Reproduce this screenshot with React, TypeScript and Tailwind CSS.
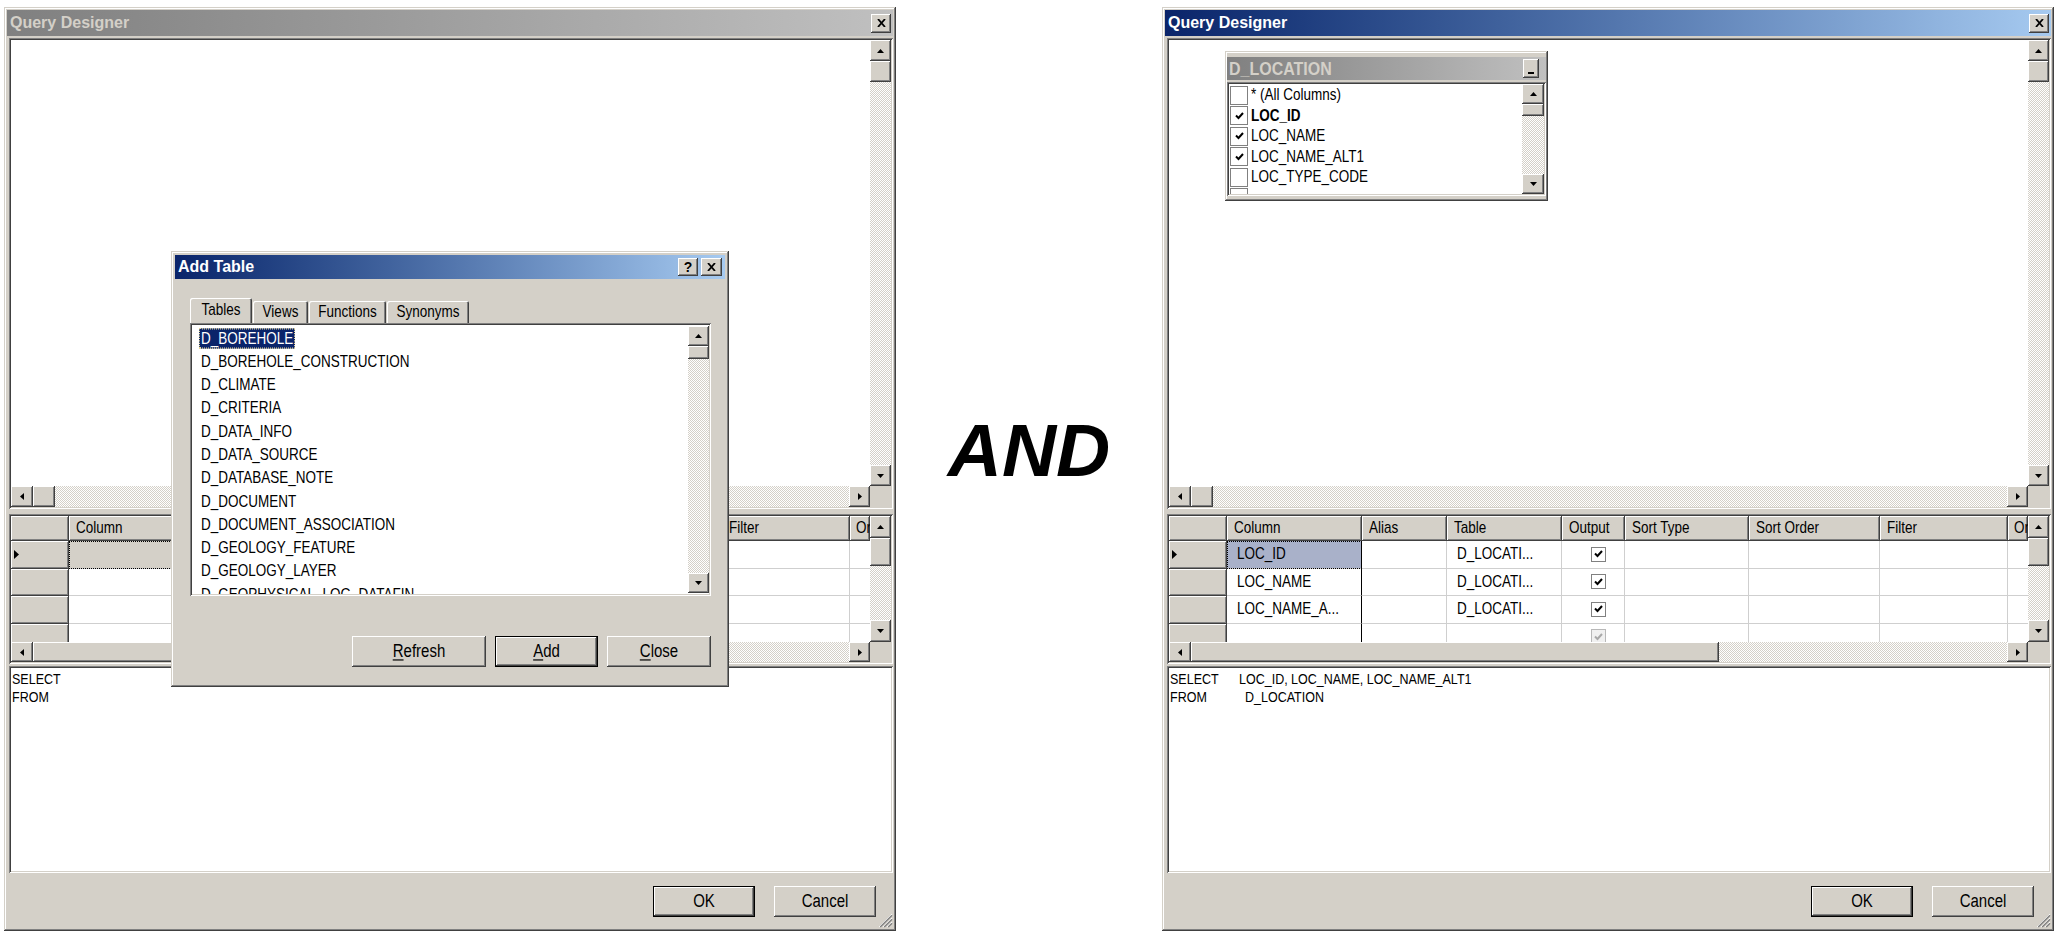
import React from "react";

const FACE = "bg-[#d4d0c8]";
const RAISED =
  "shadow-[inset_-1px_-1px_0_#404040,inset_1px_1px_0_#ffffff,inset_-2px_-2px_0_#808080,inset_2px_2px_0_#d4d0c8]";
const FRAME =
  "shadow-[inset_-1px_-1px_0_#404040,inset_1px_1px_0_#d4d0c8,inset_-2px_-2px_0_#808080,inset_2px_2px_0_#ffffff]";
const SUNKEN =
  "shadow-[inset_1px_1px_0_#808080,inset_-1px_-1px_0_#ffffff,inset_2px_2px_0_#404040,inset_-2px_-2px_0_#d4d0c8]";
const DITHER =
  "bg-[#e9e7e3] bg-[image:repeating-conic-gradient(#d4d0c8_0%_25%,#ffffff_0%_50%)] bg-size-[2px_2px]";
const SANS = "font-['Liberation_Sans',Arial,sans-serif]";
// the old screenshot's bitmap font is taller than it is wide
const TALL = "inline-block scale-y-[1.2]";

type Dir = "up" | "down" | "left" | "right";

function Arrow({ dir }: { dir: Dir }) {
  if (dir === "up")
    return (
      <svg width="7" height="4" viewBox="0 0 7 4">
        <polygon points="3.5,0 7,4 0,4" fill="#000" />
      </svg>
    );
  if (dir === "down")
    return (
      <svg width="7" height="4" viewBox="0 0 7 4">
        <polygon points="0,0 7,0 3.5,4" fill="#000" />
      </svg>
    );
  if (dir === "left")
    return (
      <svg width="4" height="7" viewBox="0 0 4 7">
        <polygon points="4,0 4,7 0,3.5" fill="#000" />
      </svg>
    );
  return (
    <svg width="4" height="7" viewBox="0 0 4 7">
      <polygon points="0,0 4,3.5 0,7" fill="#000" />
    </svg>
  );
}

function ScrollBtn({ dir, className }: { dir: Dir; className: string }) {
  return (
    <div className={`${FACE} ${RAISED} flex shrink-0 items-center justify-center ${className}`}>
      <Arrow dir={dir} />
    </div>
  );
}

function VScroll({ btn, thumb, width = "w-[21px]" }: { btn: string; thumb: string; width?: string }) {
  return (
    <div className={`${width} shrink-0 flex flex-col`}>
      <ScrollBtn dir="up" className={btn} />
      <div className={`${FACE} ${RAISED} shrink-0 ${thumb}`} />
      <div className={`flex-1 ${DITHER}`} />
      <ScrollBtn dir="down" className={btn} />
    </div>
  );
}

function HScroll({ thumb }: { thumb: string }) {
  return (
    <div className="flex flex-1 min-w-0">
      <ScrollBtn dir="left" className="w-[22px]" />
      <div className={`${FACE} ${RAISED} shrink-0 ${thumb}`} />
      <div className={`flex-1 ${DITHER}`} />
      <ScrollBtn dir="right" className="w-[21px]" />
    </div>
  );
}

function XGlyph() {
  return (
    <svg width="9" height="8" viewBox="0 0 9 8">
      <path d="M1 0 L8 8 M8 0 L1 8" stroke="#000" strokeWidth="1.8" />
    </svg>
  );
}

function TitleBar({ title, active }: { title: string; active: boolean }) {
  return (
    <div
      className={`h-[26px] shrink-0 flex items-center pl-[3px] pr-[2px] bg-linear-to-r ${
        active ? "from-[#0a246a] to-[#a6caf0]" : "from-[#808080] to-[#c0c0c0]"
      }`}
    >
      <span className={`${SANS} flex-1 font-bold text-[16px] ${active ? "text-white" : "text-[#d4d0c8]"}`}>
        {title}
      </span>
      <div className={`w-[20px] h-[19px] ${FACE} ${RAISED} flex items-center justify-center`}>
        <XGlyph />
      </div>
    </div>
  );
}

function Btn({
  w,
  def,
  children,
}: {
  w: string;
  def?: boolean;
  children: React.ReactNode;
}) {
  return (
    <div
      className={`${w} h-[31px] shrink-0 ${FACE} ${def ? "border border-black" : ""} ${RAISED} flex items-center justify-center ${SANS} text-[15px] text-black`}
    >
      <span className={TALL}>{children}</span>
    </div>
  );
}

function Check({ color = "#000" }: { color?: string }) {
  return (
    <svg width="9" height="8" viewBox="0 0 9 8">
      <polyline points="1,3.5 3.5,6 8,1" fill="none" stroke={color} strokeWidth="2" />
    </svg>
  );
}

function Grip() {
  return (
    <svg width="17" height="17" viewBox="0 0 17 17" className="self-end shrink-0">
      {[3, 7, 11].map((o) => (
        <g key={o}>
          <line x1={16} y1={o} x2={o} y2={16} stroke="#ffffff" />
          <line x1={16} y1={o + 1.2} x2={o + 1.2} y2={16} stroke="#808080" strokeWidth={1.4} />
        </g>
      ))}
    </svg>
  );
}

type GridRow = {
  column: string;
  table: string;
  output: "on" | "dim" | "none";
  current?: boolean;
};

const HEAD = [
  { label: "Column", w: "w-[135px]" },
  { label: "Alias", w: "w-[85px]" },
  { label: "Table", w: "w-[115px]" },
  { label: "Output", w: "w-[63px]" },
  { label: "Sort Type", w: "w-[124px]" },
  { label: "Sort Order", w: "w-[131px]" },
  { label: "Filter", w: "w-[128px]" },
];

function Grid({ rows, selBg }: { rows: GridRow[]; selBg: string }) {
  const cell = `h-full shrink-0 border-r border-b border-[#cfcfcf] flex items-center pl-[10px] overflow-hidden whitespace-nowrap ${SANS} text-[13.5px] text-black`;
  return (
    <div className="flex-1 min-w-0 flex flex-col overflow-hidden">
      {/* header */}
      <div className="flex h-[25px] shrink-0">
        <div className={`w-[58px] shrink-0 ${FACE} ${RAISED}`} />
        {HEAD.map((h) => (
          <div
            key={h.label}
            className={`${h.w} shrink-0 ${FACE} ${RAISED} flex items-center pl-[7px] ${SANS} text-[13.5px] text-black whitespace-nowrap overflow-hidden`}
          >
            <span className={TALL}>{h.label}</span>
          </div>
        ))}
        <div
          className={`flex-1 min-w-0 ${FACE} ${RAISED} flex items-center pl-[6px] ${SANS} text-[13.5px] text-black whitespace-nowrap overflow-hidden`}
        >
          <span className={TALL}>Or</span>
        </div>
      </div>
      {/* rows */}
      {rows.map((r, i) => (
        <div key={i} className="flex h-[27.5px] shrink-0">
          <div className={`w-[58px] shrink-0 ${FACE} ${RAISED} flex items-center pl-[3px]`}>
            {r.current && (
              <svg width="5" height="9" viewBox="0 0 5 9">
                <polygon points="0,0 5,4.5 0,9" fill="#000" />
              </svg>
            )}
          </div>
          <div
            className={`${cell} w-[135px] border-r-black ${
              r.current ? `${selBg} outline-1 outline-dotted outline-black -outline-offset-1` : "bg-white"
            }`}
          >
            <span className={TALL}>{r.column}</span>
          </div>
          <div className={`${cell} bg-white w-[85px]`} />
          <div className={`${cell} bg-white w-[115px]`}>
            <span className={TALL}>{r.table}</span>
          </div>
          <div className={`${cell} bg-white w-[63px] justify-center pl-0`}>
            {r.output !== "none" && (
              <div
                className={`w-[15px] h-[15px] border ${
                  r.output === "dim" ? "border-[#b8b8b8] bg-[#f0f0f0]" : "border-[#808080] bg-white"
                } flex items-center justify-center`}
              >
                <Check color={r.output === "dim" ? "#a8a8a8" : "#000"} />
              </div>
            )}
          </div>
          <div className={`${cell} bg-white w-[124px]`} />
          <div className={`${cell} bg-white w-[131px]`} />
          <div className={`${cell} bg-white w-[128px]`} />
          <div className={`${cell} bg-white flex-1 min-w-0 border-r-0`} />
        </div>
      ))}
    </div>
  );
}

function QueryWindow({
  active,
  diagram,
  rows,
  selBg,
  sql,
  overlay,
}: {
  active: boolean;
  diagram?: React.ReactNode;
  rows: GridRow[];
  selBg: string;
  sql: React.ReactNode;
  overlay?: React.ReactNode;
}) {
  return (
    <div className={`relative w-[892px] h-[924px] shrink-0 ${FACE} ${FRAME} p-[3px] flex flex-col`}>
      <TitleBar title="Query Designer" active={active} />
      <div className="flex-1 flex flex-col pl-[2px] pt-[2px]">
        {/* Diagram pane */}
        <div className={`h-[471px] shrink-0 ${SUNKEN} bg-white p-[2px] flex flex-col`}>
          <div className="flex flex-1 min-h-0">
            <div className="relative flex-1 bg-white">{diagram}</div>
            <VScroll btn="h-[21px]" thumb="h-[21px]" />
          </div>
          <div className="flex h-[21px] shrink-0">
            <HScroll thumb="w-[22px]" />
            <div className={`w-[21px] shrink-0 ${FACE}`} />
          </div>
        </div>
        <div className="h-[5px] shrink-0" />

        {/* Grid pane */}
        <div className={`h-[150px] shrink-0 ${SUNKEN} bg-white p-[2px] flex flex-col`}>
          <div className="flex flex-1 min-h-0">
            <Grid rows={rows} selBg={selBg} />
            <VScroll btn="h-[22px]" thumb="h-[28px]" />
          </div>
          <div className="flex h-[20px] shrink-0">
            <HScroll thumb="w-[528px]" />
            <div className={`w-[21px] shrink-0 ${FACE}`} />
          </div>
        </div>
        <div className="h-[2px] shrink-0" />

        {/* SQL pane */}
        <div className={`h-[207px] shrink-0 ${SUNKEN} bg-white p-[2px]`}>
          <div className={`${SANS} text-[12.5px] leading-[18px] text-black pl-[1px] pt-[2px]`}>{sql}</div>
        </div>

        {/* Buttons */}
        <div className="flex-1 flex justify-end">
          <div className="flex gap-[19px] pt-[13px]">
            <Btn w="w-[102px]" def>
              OK
            </Btn>
            <Btn w="w-[102px]">Cancel</Btn>
          </div>
          <Grip />
        </div>
      </div>
      {overlay}
    </div>
  );
}

const TABLES = [
  "D_BOREHOLE",
  "D_BOREHOLE_CONSTRUCTION",
  "D_CLIMATE",
  "D_CRITERIA",
  "D_DATA_INFO",
  "D_DATA_SOURCE",
  "D_DATABASE_NOTE",
  "D_DOCUMENT",
  "D_DOCUMENT_ASSOCIATION",
  "D_GEOLOGY_FEATURE",
  "D_GEOLOGY_LAYER",
  "D_GEOPHYSICAL_LOG_DATAFIN",
];

function AddTableDialog() {
  const tab = `${FACE} shadow-[inset_1px_1px_0_#ffffff,inset_-1px_0_0_#404040,inset_-2px_0_0_#808080] flex items-center justify-center ${SANS} text-[13.5px] text-black rounded-t-[2px]`;
  return (
    <div className={`absolute left-[167px] top-[244px] w-[558px] h-[436px] ${FACE} ${FRAME} p-[4px] flex flex-col`}>
      <div className="h-[24px] shrink-0 flex items-center bg-linear-to-r from-[#0a246a] to-[#a6caf0] pl-[3px] pr-[3px]">
        <span className={`${SANS} flex-1 font-bold text-[16px] text-white`}>Add Table</span>
        <div className="flex gap-[3px]">
          <div
            className={`w-[20px] h-[18px] ${FACE} ${RAISED} flex items-center justify-center ${SANS} font-bold text-[14px] leading-none text-black`}
          >
            ?
          </div>
          <div className={`w-[21px] h-[18px] ${FACE} ${RAISED} flex items-center justify-center`}>
            <XGlyph />
          </div>
        </div>
      </div>

      <div className="flex flex-col pl-[15px] pr-[14px] pt-[19px]">
        {/* Tabs */}
        <div className="flex items-end h-[25px] gap-[1px]">
          <div className={`${tab} w-[62px] h-[25px]`}>
            <span className={TALL}>Tables</span>
          </div>
          <div className={`${tab} w-[55px] h-[22px]`}>
            <span className={TALL}>Views</span>
          </div>
          <div className={`${tab} w-[77px] h-[22px]`}>
            <span className={TALL}>Functions</span>
          </div>
          <div className={`${tab} w-[82px] h-[22px]`}>
            <span className={TALL}>Synonyms</span>
          </div>
        </div>

        {/* List */}
        <div className={`h-[273px] shrink-0 ${SUNKEN} bg-white p-[2px] flex`}>
          <div className="flex-1 min-w-0 overflow-hidden pt-[2px] pl-[7px]">
            {TABLES.map((t, i) => (
              <div key={t} className={`h-[23.3px] flex items-center ${SANS} text-[13.5px] text-black`}>
                {i === 0 ? (
                  <span
                    className={`${TALL} bg-[#0a246a] text-white px-[2px] leading-[17px] outline-1 outline-dotted outline-[#e8d89a] -outline-offset-1`}
                  >
                    {t}
                  </span>
                ) : (
                  <span className={`${TALL} pl-[2px]`}>{t}</span>
                )}
              </div>
            ))}
          </div>
          <div className="flex py-[1px]">
            <VScroll btn="h-[20px]" thumb="h-[13px]" />
          </div>
        </div>

        {/* Buttons */}
        <div className="mt-[40px] flex justify-end gap-[9px]">
          <Btn w="w-[134px]">
            <span className="underline underline-offset-2">R</span>efresh
          </Btn>
          <Btn w="w-[103px]" def>
            <span className="underline underline-offset-2">A</span>dd
          </Btn>
          <Btn w="w-[104px]">
            <span className="underline underline-offset-2">C</span>lose
          </Btn>
        </div>
      </div>
    </div>
  );
}

const LOC_COLS = [
  { name: "* (All Columns)", on: false, bold: false },
  { name: "LOC_ID", on: true, bold: true },
  { name: "LOC_NAME", on: true, bold: false },
  { name: "LOC_NAME_ALT1", on: true, bold: false },
  { name: "LOC_TYPE_CODE", on: false, bold: false },
  { name: "", on: false, bold: false },
];

function TableBox() {
  return (
    <div
      className={`absolute left-[56px] top-[11px] w-[323px] h-[150px] ${FACE} ${FRAME} pt-[6px] px-[2px] pb-[5px] flex flex-col`}
    >
      <div className="h-[23px] shrink-0 flex items-center pl-[2px] pr-[7px] bg-linear-to-r from-[#808080] to-[#c0c0c0]">
        <span className={`${SANS} flex-1 font-bold text-[16px] text-[#d4d0c8]`}>
          <span className={TALL}>D_LOCATION</span>
        </span>
        <div className={`w-[16px] h-[19px] ${FACE} ${RAISED} flex items-end justify-center pb-[4px]`}>
          <div className="w-[6px] h-[2px] bg-black" />
        </div>
      </div>
      <div className={`mt-[2px] flex-1 min-h-0 ${SUNKEN} bg-white p-[2px] flex`}>
        <div className="flex-1 min-w-0 overflow-hidden pl-[1px] pt-[1px]">
          {LOC_COLS.map((c, i) => (
            <div key={i} className="h-[20.5px] flex items-center gap-[3px]">
              <div className="w-[18px] h-[19px] shrink-0 border border-[#808080] bg-white flex items-center justify-center">
                {c.on && <Check />}
              </div>
              <span className={`${SANS} ${TALL} text-[13.5px] text-black ${c.bold ? "font-bold" : ""}`}>{c.name}</span>
            </div>
          ))}
        </div>
        <VScroll btn="h-[20px]" thumb="h-[12px]" width="w-[22px]" />
      </div>
    </div>
  );
}

export default function App() {
  const emptyRows: GridRow[] = [
    { column: "", table: "", output: "none", current: true },
    { column: "", table: "", output: "none" },
    { column: "", table: "", output: "none" },
    { column: "", table: "", output: "none" },
  ];
  const locRows: GridRow[] = [
    { column: "LOC_ID", table: "D_LOCATI...", output: "on", current: true },
    { column: "LOC_NAME", table: "D_LOCATI...", output: "on" },
    { column: "LOC_NAME_A...", table: "D_LOCATI...", output: "on" },
    { column: "", table: "", output: "dim" },
  ];

  return (
    <div className="w-[2057px] h-[943px] bg-white flex items-start pl-[4px] pt-[7px] overflow-hidden">
      {/* Before */}
      <QueryWindow
        active={false}
        rows={emptyRows}
        selBg="bg-[#d4d0c8]"
        sql={
          <>
            <div>
              <span className={TALL}>SELECT</span>
            </div>
            <div>
              <span className={TALL}>FROM</span>
            </div>
          </>
        }
        overlay={<AddTableDialog />}
      />

      {/* Divider */}
      <div className="w-[266px] h-[924px] shrink-0 flex items-center justify-center pb-[38px]">
        <span className={`${SANS} font-bold italic text-[75px] leading-none text-black`}>AND</span>
      </div>

      {/* After */}
      <QueryWindow
        active
        diagram={<TableBox />}
        rows={locRows}
        selBg="bg-[#a9b1c9]"
        sql={
          <>
            <div>
              <span className={`${TALL} w-[69px]`}>SELECT</span>
              <span className={TALL}>LOC_ID, LOC_NAME, LOC_NAME_ALT1</span>
            </div>
            <div>
              <span className={`${TALL} w-[75px]`}>FROM</span>
              <span className={TALL}>D_LOCATION</span>
            </div>
          </>
        }
      />
    </div>
  );
}
